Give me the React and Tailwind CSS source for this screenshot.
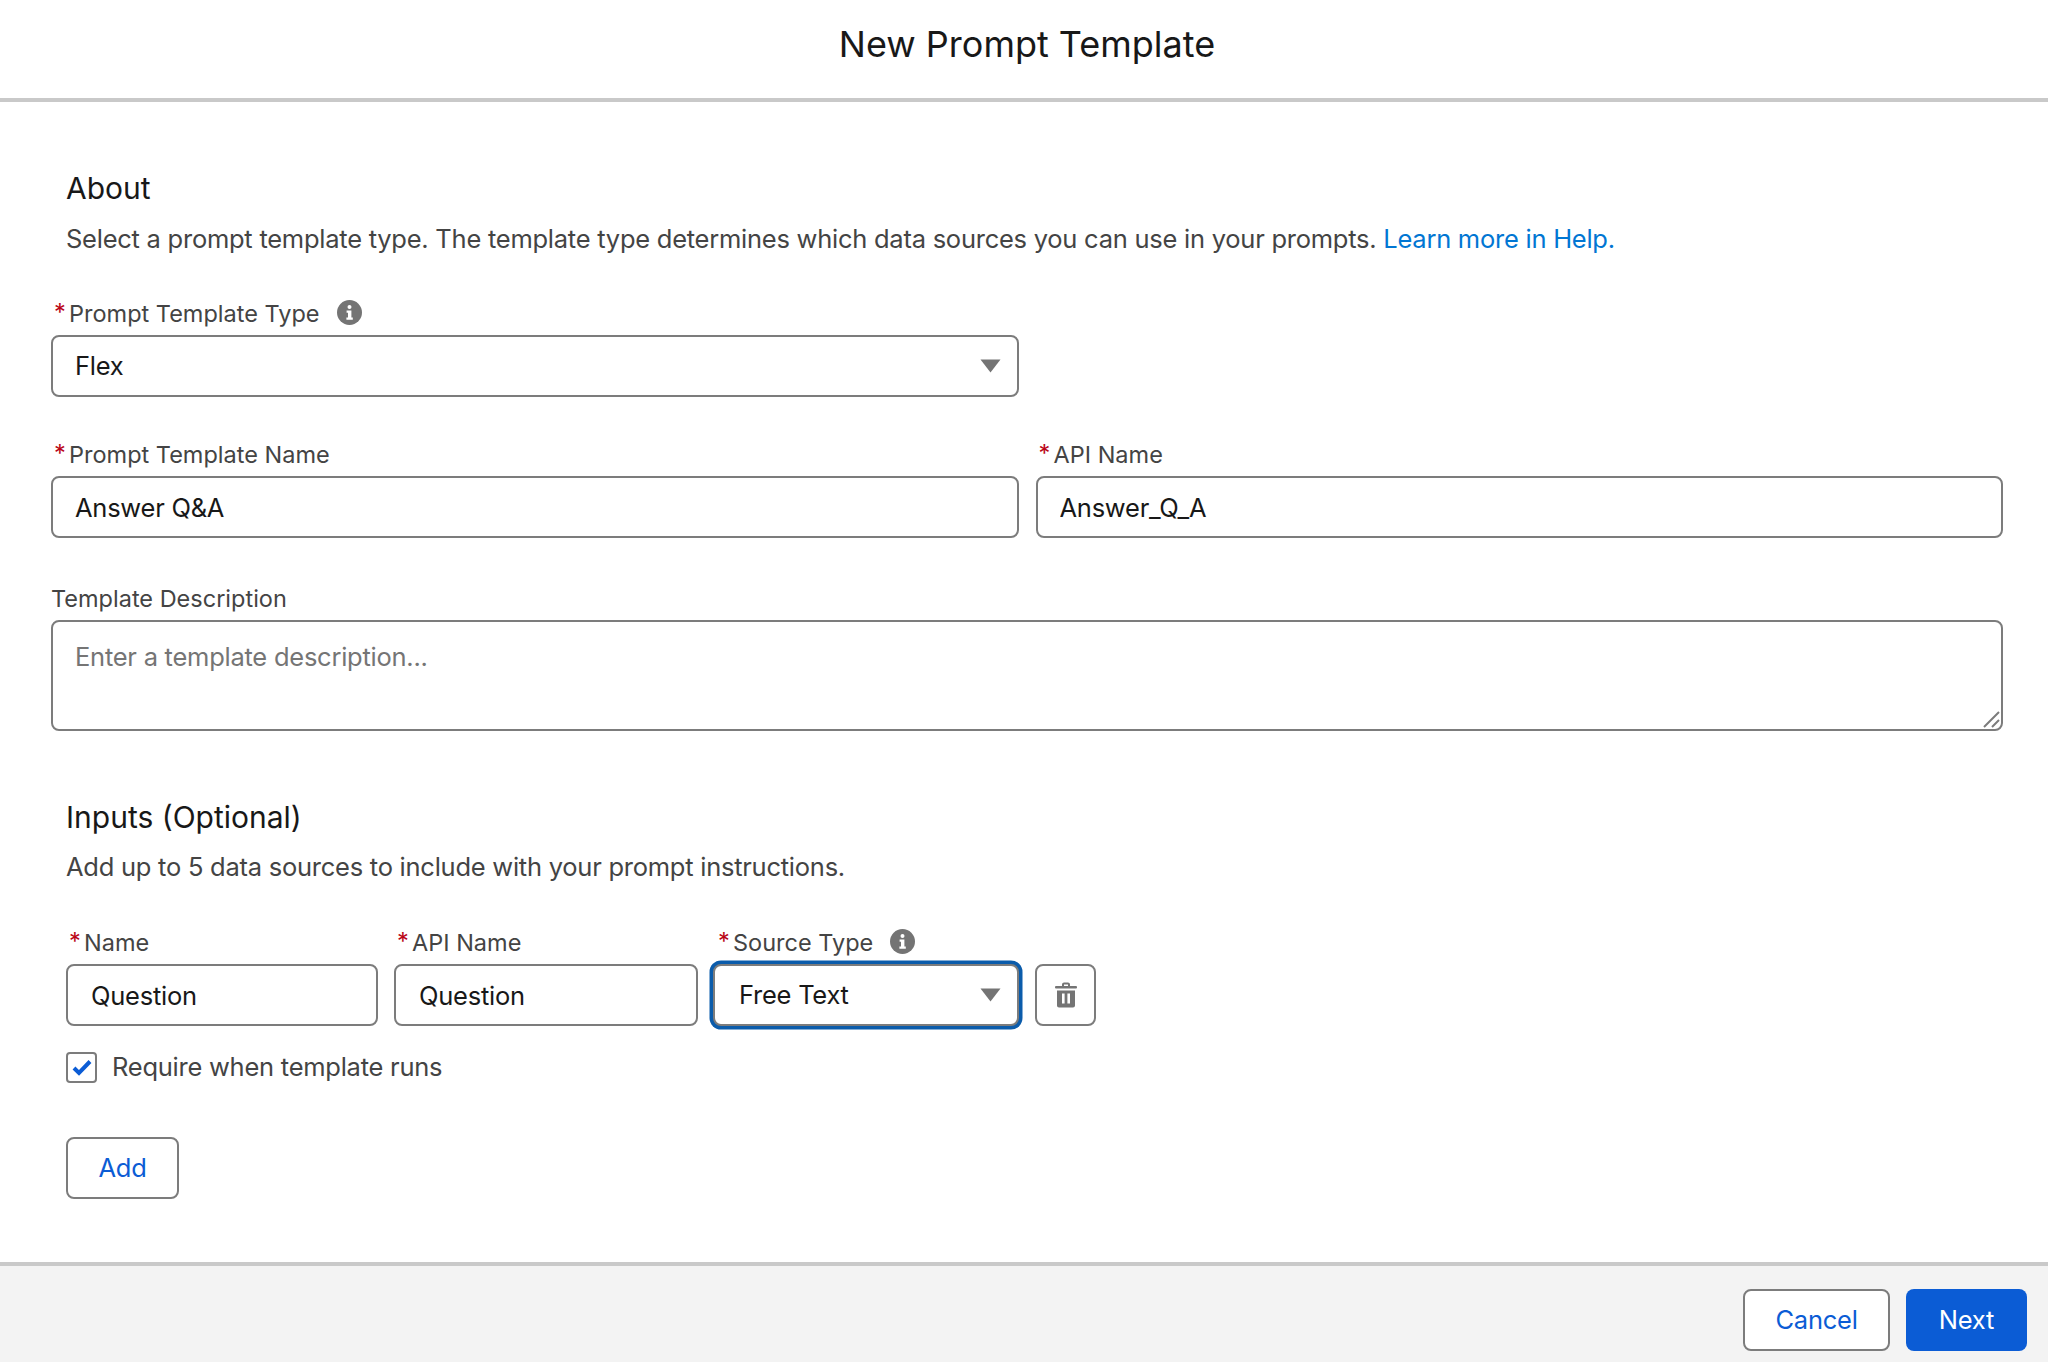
import React from "react"

const Info = ({className}) => (
    <svg className={className} width="25" height="25" viewBox="0 0 25 25">
        <circle cx="12.5" cy="12.5" r="12.5" fill="#747474" />
        <circle cx="12.5" cy="7" r="2" fill="#fff" />
        <path d="M9.6 10.6h4.8v7h1.4v2.2H9.4v-2.2h1.6v-4.8H9.600z" fill="#fff" />
    </svg>
)

const Caret = () => (
    <svg width="21" height="14" viewBox="0 0 21 14">
        <path d="M0.5 0.5h20L10.5 13.500z" fill="#747474" />
    </svg>
)

const Trash = () => (
    <svg width="22" height="26" viewBox="0 0 22 26">
        <path d="M7 4V2.600C7 1.400 8 .6 9 .6h4c1 0 2 .8 2 2V4h-2V2.600H9V4z" fill="#747474" />
        <rect x="0" y="4" width="22" height="2.400" rx="1" fill="#747474" />
        <path d="M2 8.400h18v15c0 1.200-.9 2-2 2H4c-1.100 0-2-.8-2-2z" fill="#747474" />
        <rect x="7" y="11.500" width="2.600" height="10" fill="#fff" />
        <rect x="12.400" y="11.500" width="2.600" height="10" fill="#fff" />
    </svg>
)

const Label = ({children, required, info, className = ""}) => (
    <div className={`flex items-center h-[30px] text-[23.5px] text-[#444444] ${required ? "pl-[3px]" : ""} ${className}`}>
        {required && <span className="text-[#ba0517] w-[15px] -translate-y-[2px]">*</span>}
        <span>{children}</span>
        {info && <Info className="ml-[17px] -translate-y-[2px]" />}
    </div>
)

const boxClass = "h-[62px] rounded-[8px] border-[2.5px] border-[#7c7c7c] bg-white text-[25.5px] tracking-[-0.25px] text-[#181818] outline-none"

const Field = ({label, value, required = true, className = "", pad = "px-[22px]"}) => (
    <div className={className}>
        <Label required={required}>{label}</Label>
        <input className={`${boxClass} ${pad} w-full mt-[6px] block`} defaultValue={value} readOnly />
    </div>
)

const App = () => {
    return (
        <div className="w-full h-[1362px] flex flex-col bg-white font-['Inter',sans-serif]">
            {/* header */}
            <header className="h-[102px] shrink-0 flex items-center justify-center border-b-4 border-[#c9c9c9] pb-[10px] pl-[6px]">
                <h1 className="text-[36px] text-[#181818]">New Prompt Template</h1>
            </header>

            <main className="flex-1 pl-[51px] pr-[45px] pt-[66px]">
                {/* about */}
                <h2 className="pl-[15px] text-[30px] leading-[40px] text-[#181818]">About</h2>
                <p className="pl-[15px] mt-[11px] text-[25.5px] tracking-[-0.25px] leading-[40px] text-[#444444]">
                    Select a prompt template type. The template type determines which data sources you can use in your prompts.{" "}
                    <a className="text-[#0176d3]" href="#">Learn more in Help.</a>
                </p>

                <div className="mt-[40px]">
                    <Label required info>Prompt Template Type</Label>
                    <div className={`${boxClass} w-[968px] mt-[6px] flex items-center justify-between pl-[22px] pr-[16px]`}>
                        <span>Flex</span>
                        <Caret />
                    </div>
                </div>

                <div className="grid grid-cols-2 gap-[17px] mt-[43px]">
                    <Field label="Prompt Template Name" value="Answer Q&A" />
                    <Field label="API Name" value="Answer_Q_A" />
                </div>

                <div className="mt-[46px]">
                    <Label>Template Description</Label>
                    <div className="relative mt-[6px]">
                        <textarea
                            className="block w-full h-[111px] resize-none rounded-[8px] border-[2.5px] border-[#7c7c7c] bg-white px-[22px] py-[17px] text-[25.5px] tracking-[-0.25px] leading-[36px] outline-none placeholder:text-[#757575]"
                            placeholder="Enter a template description..."
                            readOnly
                        />
                        <svg className="absolute right-[3px] bottom-[3px]" width="18" height="18" viewBox="0 0 18 18">
                            <path d="M2 17L17 2M10 17l7-7" stroke="#7c7c7c" strokeWidth="2" />
                        </svg>
                    </div>
                </div>

                {/* inputs */}
                <div className="pl-[15px] mt-[66px]">
                    <h2 className="text-[30px] leading-[40px] text-[#181818]">Inputs (Optional)</h2>
                    <p className="mt-[10px] text-[25.5px] tracking-[-0.25px] leading-[40px] text-[#444444]">
                        Add up to 5 data sources to include with your prompt instructions.
                    </p>

                    <div className="flex items-end mt-[41px]">
                        <Field className="w-[312px]" label="Name" value="Question" pad="px-[23px]" />
                        <Field className="w-[304px] ml-[16px]" label="API Name" value="Question" pad="px-[23px]" />
                        <div className="w-[306px] ml-[15px]">
                            <Label required info className="ml-[2px]">Source Type</Label>
                            <div className={`${boxClass} mt-[6px] flex items-center justify-between pl-[24px] pr-[16px] shadow-[0_0_0_3.5px_#0b5cab]`}>
                                <span>Free Text</span>
                                <Caret />
                            </div>
                        </div>
                        <button className="ml-[16px] w-[61px] h-[62px] rounded-[8px] border-[2.5px] border-[#7c7c7c] bg-white flex items-center justify-center">
                            <Trash />
                        </button>
                    </div>

                    <label className="flex items-center mt-[22px] text-[25.5px] tracking-[-0.25px] text-[#444444]">
                        <span className="w-[31px] h-[31px] rounded-[4px] border-[2.5px] border-[#7c7c7c] flex items-center justify-center">
                            <svg width="20" height="17" viewBox="0 0 20 17">
                                <path d="M2 9l5 5L18 2.500" fill="none" stroke="#0b5cd5" strokeWidth="4" />
                            </svg>
                        </span>
                        <span className="ml-[15px]">Require when template runs</span>
                    </label>

                    <button className="mt-[51px] w-[113px] h-[62px] rounded-[8px] border-[2.5px] border-[#7c7c7c] bg-white text-[25.5px] tracking-[-0.25px] text-[#0b5cd5]">
                        Add
                    </button>
                </div>
            </main>

            {/* footer */}
            <footer className="h-[100px] shrink-0 flex items-start justify-end gap-[16px] border-t-4 border-[#c9c9c9] bg-[#f3f3f3] pt-[23px] pr-[21px]">
                <button className="w-[147px] h-[62px] rounded-[8px] border-[2.5px] border-[#7c7c7c] bg-white text-[25.5px] tracking-[-0.25px] text-[#0b5cd5]">Cancel</button>
                <button className="w-[121px] h-[62px] rounded-[8px] bg-[#0b5cd5] text-[25.5px] tracking-[-0.25px] text-white">Next</button>
            </footer>
        </div>
    )
}

export default App
